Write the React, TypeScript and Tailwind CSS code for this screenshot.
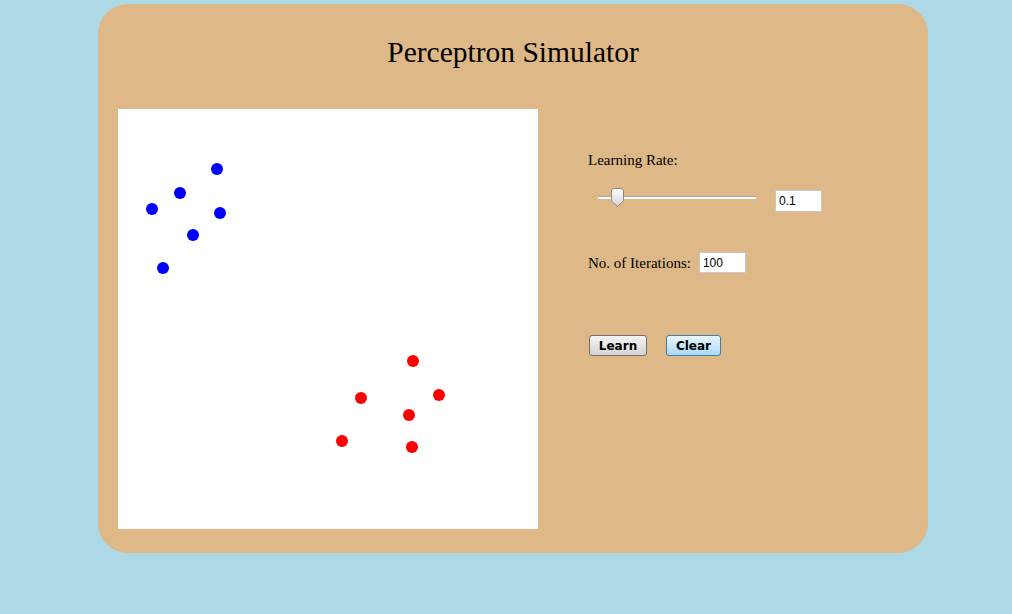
import { useState } from "react";

type Point = { x: number; y: number; label: 1 | -1 };

// points are stored relative to the drawing area (420x420)
const initialPoints: Point[] = [
  { x: 99, y: 60, label: 1 },
  { x: 62, y: 84, label: 1 },
  { x: 34, y: 100, label: 1 },
  { x: 102, y: 104, label: 1 },
  { x: 75, y: 126, label: 1 },
  { x: 45, y: 159, label: 1 },
  { x: 295, y: 252, label: -1 },
  { x: 243, y: 289, label: -1 },
  { x: 321, y: 286, label: -1 },
  { x: 291, y: 306, label: -1 },
  { x: 224, y: 332, label: -1 },
  { x: 294, y: 338, label: -1 },
];

function SliderThumb() {
  return (
    <svg width="13" height="19" viewBox="0 0 13 19" className="block">
      <defs>
        <linearGradient id="thumbFill" x1="0" y1="0" x2="0" y2="1">
          <stop offset="0" stopColor="#ffffff" />
          <stop offset="1" stopColor="#d4d4d4" />
        </linearGradient>
      </defs>
      <path
        d="M0.5 3 Q0.5 0.5 3 0.5 H10 Q12.5 0.5 12.5 3 V13 L6.5 18.5 L0.5 13 Z"
        fill="url(#thumbFill)"
        stroke="#8a8a8a"
      />
    </svg>
  );
}

export default function App() {
  const [points, setPoints] = useState<Point[]>(initialPoints);
  const [rate] = useState("0.1");
  const [iterations, setIterations] = useState("100");

  return (
    <div className="min-h-[614px] w-full bg-[#add8e6] pt-[4px]">
      <div className="ml-[98px] h-[549px] w-[830px] rounded-[30px] bg-[#deb887] font-['Liberation_Serif',serif] text-black">
        {/* title */}
        <div className="h-[105px] pt-[34px] text-center">
          <h1 className="text-[29.5px] leading-[29px]">Perceptron Simulator</h1>
        </div>

        <div className="flex flex-row items-start">
          {/* drawing area */}
          <div className="relative ml-[20px] h-[420px] w-[420px] bg-white">
            {points.map((p, i) => (
              <span
                key={i}
                className={`absolute h-[12px] w-[12px] rounded-full ${
                  p.label === 1 ? "bg-[#0000ff]" : "bg-[#ff0000]"
                }`}
                style={{ left: p.x - 6, top: p.y - 6 }}
              />
            ))}
          </div>

          {/* controls */}
          <div className="ml-[50px] flex flex-col pt-[44px]">
            <p className="text-[15px] leading-[15px]">Learning Rate:</p>

            <div className="mt-[22px] flex flex-row items-start">
              <div className="relative ml-[10px] mt-[-2px] h-[19px] w-[158px]">
                <div className="absolute left-0 right-0 top-[8px] h-[3px] border-t border-[#a9a9a9] bg-white" />
                <div className="absolute left-[13px] top-0">
                  <SliderThumb />
                </div>
              </div>
              <input
                readOnly
                value={rate}
                className="ml-[19px] h-[22px] w-[47px] border border-[#c8c8c8] bg-white px-[3px] font-['Liberation_Sans',sans-serif] text-[12px] outline-none"
              />
            </div>

            <div className="mt-[40px] flex h-[21px] flex-row items-center">
              <span className="pt-[2px] text-[15px] leading-[15px]">No. of Iterations:</span>
              <input
                value={iterations}
                onChange={(e) => setIterations(e.target.value)}
                className="ml-[8px] h-[21px] w-[47px] border border-[#c8c8c8] bg-white px-[3px] font-['Liberation_Sans',sans-serif] text-[12px] outline-none"
              />
            </div>

            <div className="mt-[62px] flex flex-row">
              <button className="ml-[1px] h-[21px] w-[58px] rounded-[3px] border border-[#707070] bg-gradient-to-b from-[#f4f4f4] to-[#d3d3d3] pt-[1px] font-['DejaVu_Sans',sans-serif] text-[12px] font-bold leading-none">
                Learn
              </button>
              <button
                onClick={() => setPoints([])}
                className="ml-[19px] h-[21px] w-[55px] rounded-[3px] border border-[#3c7fb1] bg-gradient-to-b from-[#eaf6fd] to-[#a9daf5] pt-[1px] font-['DejaVu_Sans',sans-serif] text-[12px] font-bold leading-none"
              >
                Clear
              </button>
            </div>
          </div>
        </div>
      </div>
    </div>
  );
}
